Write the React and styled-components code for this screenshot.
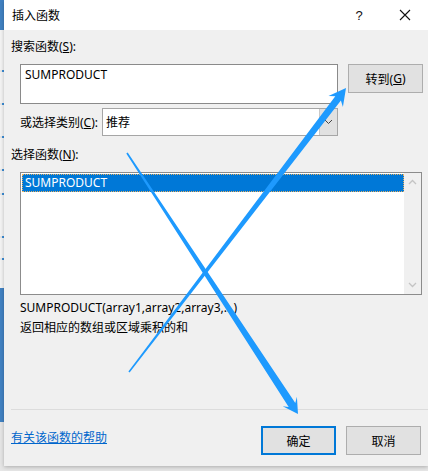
import styled, { createGlobalStyle } from "styled-components";

const GlobalStyle = createGlobalStyle`
  html, body {
    margin: 0;
    padding: 0;
    background: #ebebeb;
  }
  body {
    font-family: "Noto Sans", "Noto Sans CJK SC", sans-serif;
    font-size: 12px;
    color: #000;
  }
`;

const stripSegments = [
  { h: 30, kind: "blue" },
  { h: 40, kind: "light" },
  { h: 2, kind: "tick" },
  { h: 31, kind: "light" },
  { h: 2, kind: "tick" },
  { h: 31, kind: "light" },
  { h: 2, kind: "tick" },
  { h: 31, kind: "light" },
  { h: 2, kind: "tick" },
  { h: 22, kind: "light" },
  { h: 2, kind: "tick" },
  { h: 41, kind: "light" },
  { h: 2, kind: "tick" },
  { h: 20, kind: "light" },
  { h: 2, kind: "tick" },
  { h: 28, kind: "light" },
  { h: 134, kind: "blue" },
  { h: 49, kind: "gray" },
];

const App = () => {
  return (
    <Screen>
      <GlobalStyle />
      <Strip>
        {stripSegments.map((s, i) => (
          <Segment key={i} $h={s.h} $kind={s.kind} />
        ))}
      </Strip>
      <Dialog>
        <TitleBar>
          <Title>插入函数</Title>
          <TitleButton>
            <HelpMark>?</HelpMark>
          </TitleButton>
          <TitleButton>
            <svg width="12" height="12" viewBox="0 0 12 12">
              <path d="M1 1 L11 11 M11 1 L1 11" stroke="#111" strokeWidth="1.1" />
            </svg>
          </TitleButton>
        </TitleBar>

        <Body>
          <Label $top={9}>
            搜索函数(<u>S</u>):
          </Label>

          <SearchRow>
            <TextBox>SUMPRODUCT</TextBox>
            <Button>
              转到(<u>G</u>)
            </Button>
          </SearchRow>

          <CategoryRow>
            <InlineLabel>
              或选择类别(<u>C</u>):
            </InlineLabel>
            <Select>
              <SelectValue>推荐</SelectValue>
              <SelectArrow>
                <svg width="9" height="6" viewBox="0 0 9 6">
                  <path d="M1 1 L4.5 4.5 L8 1" fill="none" stroke="#444" strokeWidth="1" />
                </svg>
              </SelectArrow>
            </Select>
          </CategoryRow>

          <Label $top={11}>
            选择函数(<u>N</u>):
          </Label>

          <ListBox>
            <ListItems>
              <ListItem $selected>SUMPRODUCT</ListItem>
            </ListItems>
            <ScrollBar>
              <svg width="9" height="6" viewBox="0 0 9 6">
                <path d="M1 5 L4.5 1.5 L8 5" fill="none" stroke="#c4c4c4" strokeWidth="1.3" />
              </svg>
              <svg width="9" height="6" viewBox="0 0 9 6">
                <path d="M1 1 L4.5 4.5 L8 1" fill="none" stroke="#c4c4c4" strokeWidth="1.3" />
              </svg>
            </ScrollBar>
          </ListBox>

          <Description $top={5}>SUMPRODUCT(array1,array2,array3,...)</Description>
          <Description $top={4}>返回相应的数组或区域乘积的和</Description>

          <Separator />

          <Footer>
            <HelpLink>有关该函数的帮助</HelpLink>
            <Button $default>确定</Button>
            <Button>取消</Button>
          </Footer>
        </Body>
      </Dialog>

      <Annotation width="428" height="471" viewBox="0 0 428 471">
        <polygon
          points="129.6,372.5 340.9,100.4 342.9,107 346,88 328.5,96 335.3,96.2 128.4,371.5"
          fill="#1e9afe"
        />
        <polygon
          points="127.7,152.6 295.3,402.9 296.9,396.8 298,414 282.7,406.2 288.7,407.1 126.3,153.4"
          fill="#1e9afe"
        />
      </Annotation>
    </Screen>
  );
};

export default App;

/* ---------------------------- Styled Components --------------------------- */

const Screen = styled.div`
  position: relative;
  width: 428px;
  height: 471px;
  overflow: hidden;
  display: flex;
  background: #e6e6e6;
`;

const Strip = styled.div`
  width: 4px;
  flex-shrink: 0;
  display: flex;
  flex-direction: column;
`;

const segColors = {
  blue: "#4182c3",
  light: "#f4f4f4",
  tick: "#3c8dd6",
  gray: "#e6e6e6",
};

const Segment = styled.div`
  height: ${p => p.$h}px;
  background: ${p => segColors[p.$kind]};
  ${p => p.$kind === "tick" && "margin-left: 2px;"}
`;

const Dialog = styled.div`
  width: 424px;
  height: 466px;
  flex-shrink: 0;
  display: flex;
  flex-direction: column;
  background: #f0f0f0;
  box-shadow: 0 1px 4px rgba(0, 0, 0, 0.25);
`;

const TitleBar = styled.div`
  height: 30px;
  display: flex;
  align-items: center;
  background: #fff;
  padding-left: 8px;
`;

const Title = styled.div`
  flex: 1;
  font-size: 12px;
`;

const TitleButton = styled.div`
  width: 46px;
  height: 30px;
  display: flex;
  align-items: center;
  justify-content: center;
`;

const HelpMark = styled.span`
  font-size: 13px;
  font-family: "Liberation Sans", sans-serif;
  color: #111;
`;

const Body = styled.div`
  flex: 1;
  display: flex;
  flex-direction: column;
  padding: 0 0 11px 7px;
`;

const Label = styled.div`
  margin-top: ${p => p.$top}px;
  line-height: 16px;
  height: 16px;
`;

const SearchRow = styled.div`
  margin-top: 9px;
  padding-left: 9px;
  display: flex;
  align-items: flex-start;
  gap: 10px;
`;

const TextBox = styled.div`
  box-sizing: border-box;
  width: 318px;
  height: 40px;
  background: #fff;
  border: 1px solid #8a8a8a;
  padding: 2px 4px;
  line-height: 16px;
`;

const Button = styled.div`
  box-sizing: border-box;
  width: 75px;
  height: 29px;
  display: flex;
  align-items: center;
  justify-content: center;
  background: #e1e1e1;
  border: ${p => (p.$default ? "2px solid #0078d7" : "1px solid #adadad")};
`;

const CategoryRow = styled.div`
  margin-top: 4px;
  padding-left: 9px;
  display: flex;
  align-items: center;
  height: 28px;
`;

const InlineLabel = styled.div`
  width: 82px;
`;

const Select = styled.div`
  box-sizing: border-box;
  width: 236px;
  height: 28px;
  display: flex;
  background: #fff;
  border: 1px solid #a6a6a6;
`;

const SelectValue = styled.div`
  flex: 1;
  display: flex;
  align-items: center;
  padding-left: 3px;
`;

const SelectArrow = styled.div`
  width: 17px;
  display: flex;
  align-items: center;
  justify-content: center;
  background: #e1e1e1;
  border-left: 1px solid #c8c8c8;
`;

const ListBox = styled.div`
  box-sizing: border-box;
  margin: 9px 6px 0 9px;
  height: 123px;
  display: flex;
  background: #fff;
  border: 1px solid #8c8c8c;
`;

const ListItems = styled.div`
  flex: 1;
  padding: 1px 0 0 1px;
`;

const ListItem = styled.div`
  box-sizing: border-box;
  height: 18px;
  line-height: 16px;
  padding-left: 2px;
  color: ${p => (p.$selected ? "#fff" : "#000")};
  background: ${p => (p.$selected ? "#0078d7" : "transparent")};
  border: 1px dotted ${p => (p.$selected ? "#e8b060" : "transparent")};
`;

const ScrollBar = styled.div`
  width: 17px;
  display: flex;
  flex-direction: column;
  justify-content: space-between;
  align-items: center;
  padding: 6px 0 6px;
  background: #f0f0f0;
`;

const Description = styled.div`
  margin-top: ${p => p.$top}px;
  padding-left: 9px;
  line-height: 16px;
  height: 16px;
`;

const Separator = styled.div`
  margin-top: 73px;
  height: 1px;
  background: #dcdcdc;
`;

const Footer = styled.div`
  margin-top: 16px;
  padding-right: 7px;
  display: flex;
  align-items: flex-start;
  gap: 10px;
`;

const HelpLink = styled.a`
  flex: 1;
  margin-top: 4px;
  line-height: 16px;
  color: #0066cc;
  text-decoration: underline;
  cursor: pointer;
`;

const Annotation = styled.svg`
  position: absolute;
  left: 0;
  top: 0;
  pointer-events: none;
`;
